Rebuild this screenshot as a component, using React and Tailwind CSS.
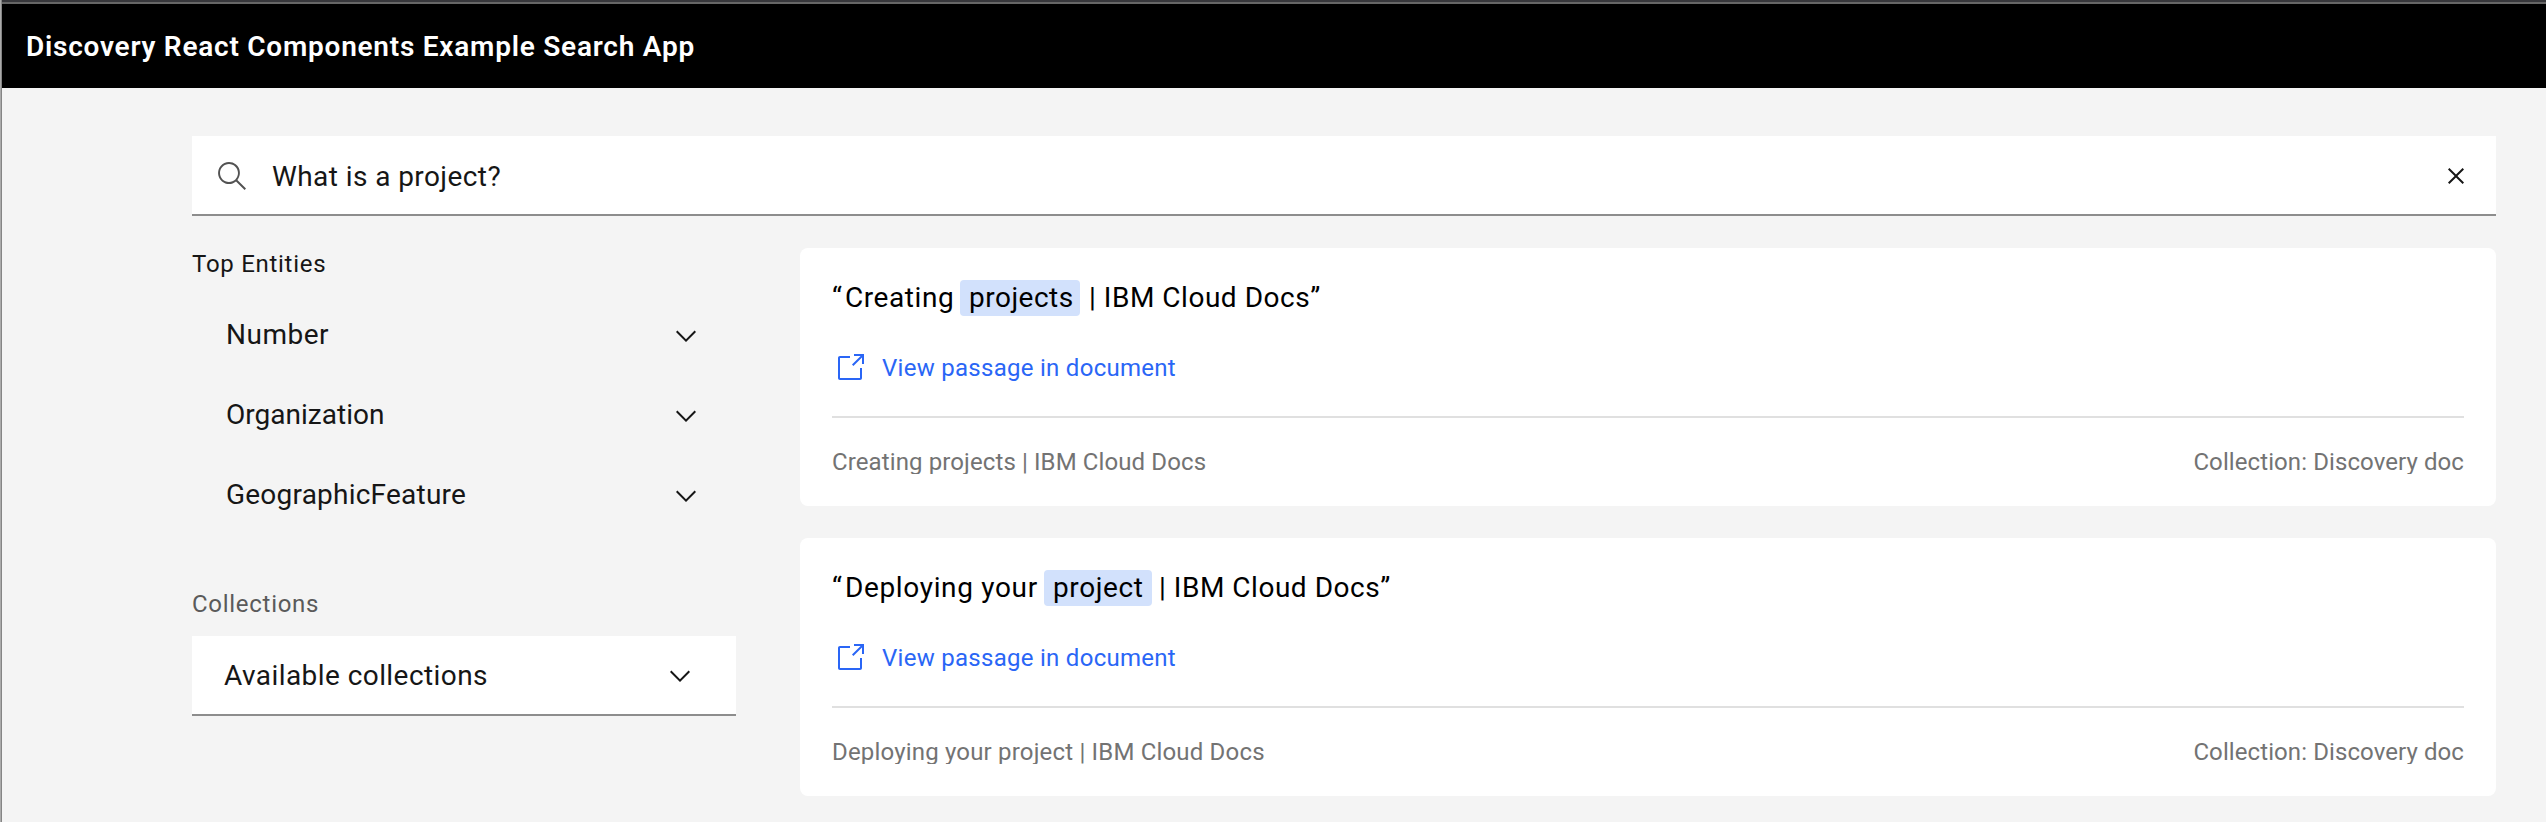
function Icon({ path, className }) {
  return (
    <svg viewBox="0 0 16 16" className={`size-8 shrink-0 fill-current ${className ?? ""}`} aria-hidden="true">
      <path d={path} />
    </svg>
  );
}

const SEARCH =
  "M15,14.3L10.7,10c1.9-2.3,1.6-5.8-0.7-7.7S4.2,0.7,2.3,3S0.7,8.8,3,10.7c2,1.7,5,1.7,7,0l4.3,4.3L15,14.3z M2,6.5C2,4,4,2,6.5,2S11,4,11,6.5S9,11,6.5,11S2,9,2,6.5z";
const CLOSE = "M12 4.7L11.3 4 8 7.3 4.7 4 4 4.7 7.3 8 4 11.3 4.7 12 8 8.7 11.3 12 12 11.3 8.7 8z";
const CHEVRON = "M8 11L3 6 3.7 5.3 8 9.6 12.3 5.3 13 6z";
const LAUNCH =
  "M13,14H3c-0.6,0-1-0.4-1-1V3c0-0.6,0.4-1,1-1h5v1H3v10h10V8h1v5C14,13.6,13.6,14,13,14z M10 1 10 2 13.3 2 9 6.3 9.7 7 14 2.7 14 6 15 6 15 1z";

const FACETS = [
  { name: "Number", tracking: "tracking-[0.5px]" },
  { name: "Organization", tracking: "tracking-[0.02px]" },
  { name: "GeographicFeature", tracking: "tracking-[0.22px]" },
];

const RESULTS = [
  {
    before: "Creating",
    match: "projects",
    title: "Creating projects | IBM Cloud Docs",
    beforeClass: "w-32 tracking-[0.6px]",
    matchClass: "w-[120px] tracking-[0.5px]",
    afterClass: "ml-[9px]",
    titleClass: "tracking-[0.11px]",
  },
  {
    before: "Deploying your",
    match: "project",
    title: "Deploying your project | IBM Cloud Docs",
    beforeClass: "w-[212px] tracking-[0.66px]",
    matchClass: "w-[108px] tracking-[0.6px]",
    afterClass: "ml-[7px]",
    titleClass: "tracking-[0.18px]",
  },
];

function ResultCard({ result }) {
  return (
    <article className="h-[258px] rounded-lg bg-white px-8 pt-8">
      <h2 className="flex h-9 items-center whitespace-nowrap text-[28px] leading-9 text-black">
        <span className={result.beforeClass}>
          <span className="tracking-[3px]">“</span>
          {result.before}
        </span>
        <mark className={`rounded bg-[#d2e1fc] pl-[9px] text-black ${result.matchClass}`}>{result.match}</mark>
        <span className={`tracking-[0.52px] ${result.afterClass}`}>| IBM Cloud Docs”</span>
      </h2>
      <a className="mt-9 flex h-8 items-center gap-4 pl-0.5 text-2xl leading-8 tracking-[0.28px] text-[#2a66f6]">
        <Icon path={LAUNCH} />
        <span>View passage in document</span>
      </a>
      <footer className="mt-8 flex justify-between border-t-2 border-[#e0e0e0] pt-8 text-2xl leading-6 text-[#737373]">
        <span className={`h-6 overflow-hidden whitespace-nowrap ${result.titleClass}`}>{result.title}</span>
        <span className="h-6 overflow-hidden whitespace-nowrap tracking-[0.09px]">Collection: Discovery doc</span>
      </footer>
    </article>
  );
}

export default function App() {
  return (
    <div className="flex h-[822px] w-[2546px] overflow-hidden bg-[#f4f4f4] font-['Roboto',sans-serif] text-[#161616]">
      <div className="w-0.5 shrink-0 border-r border-[#858585] bg-[#ababab]" />
      <div className="flex min-w-0 grow flex-col">
        <div className="h-1 border-b-2 border-[#666666] bg-[#37373b]" />
        <header className="flex h-[84px] items-center bg-black pt-px pl-6 text-[28px] font-semibold tracking-[0.76px] text-white">
          Discovery React Components Example Search App
        </header>
        <main className="flex flex-col gap-8 pt-12 pr-[50px] pl-[190px]">
          <div className="flex h-20 items-center bg-white px-6 shadow-[inset_0_-2px_0_#8d8d8d]">
            <Icon path={SEARCH} className="text-[#525252]" />
            <span className="ml-6 grow pt-px text-[28px] tracking-[0.42px]">What is a project?</span>
            <Icon path={CLOSE} />
          </div>
          <div className="flex gap-16">
            <aside className="w-[544px] shrink-0">
              <h3 className="text-2xl leading-8 tracking-[0.72px]">Top Entities</h3>
              <ul className="mt-4">
                {FACETS.map((facet) => (
                  <li key={facet.name} className="flex h-20 items-center justify-between pr-[34px] pl-[34px]">
                    <span className={`pb-[3px] text-[28px] ${facet.tracking}`}>{facet.name}</span>
                    <Icon path={CHEVRON} />
                  </li>
                ))}
              </ul>
              <p className="mt-[52px] text-2xl leading-8 tracking-[0.72px] text-[#5a5a5a]">Collections</p>
              <div className="mt-4 flex h-20 items-center justify-between bg-white pr-10 pl-8 shadow-[inset_0_-2px_0_#8d8d8d]">
                <span className="text-[28px] tracking-[0.43px]">Available collections</span>
                <Icon path={CHEVRON} />
              </div>
            </aside>
            <section className="flex grow flex-col gap-8">
              {RESULTS.map((result) => (
                <ResultCard key={result.title} result={result} />
              ))}
            </section>
          </div>
        </main>
      </div>
    </div>
  );
}
